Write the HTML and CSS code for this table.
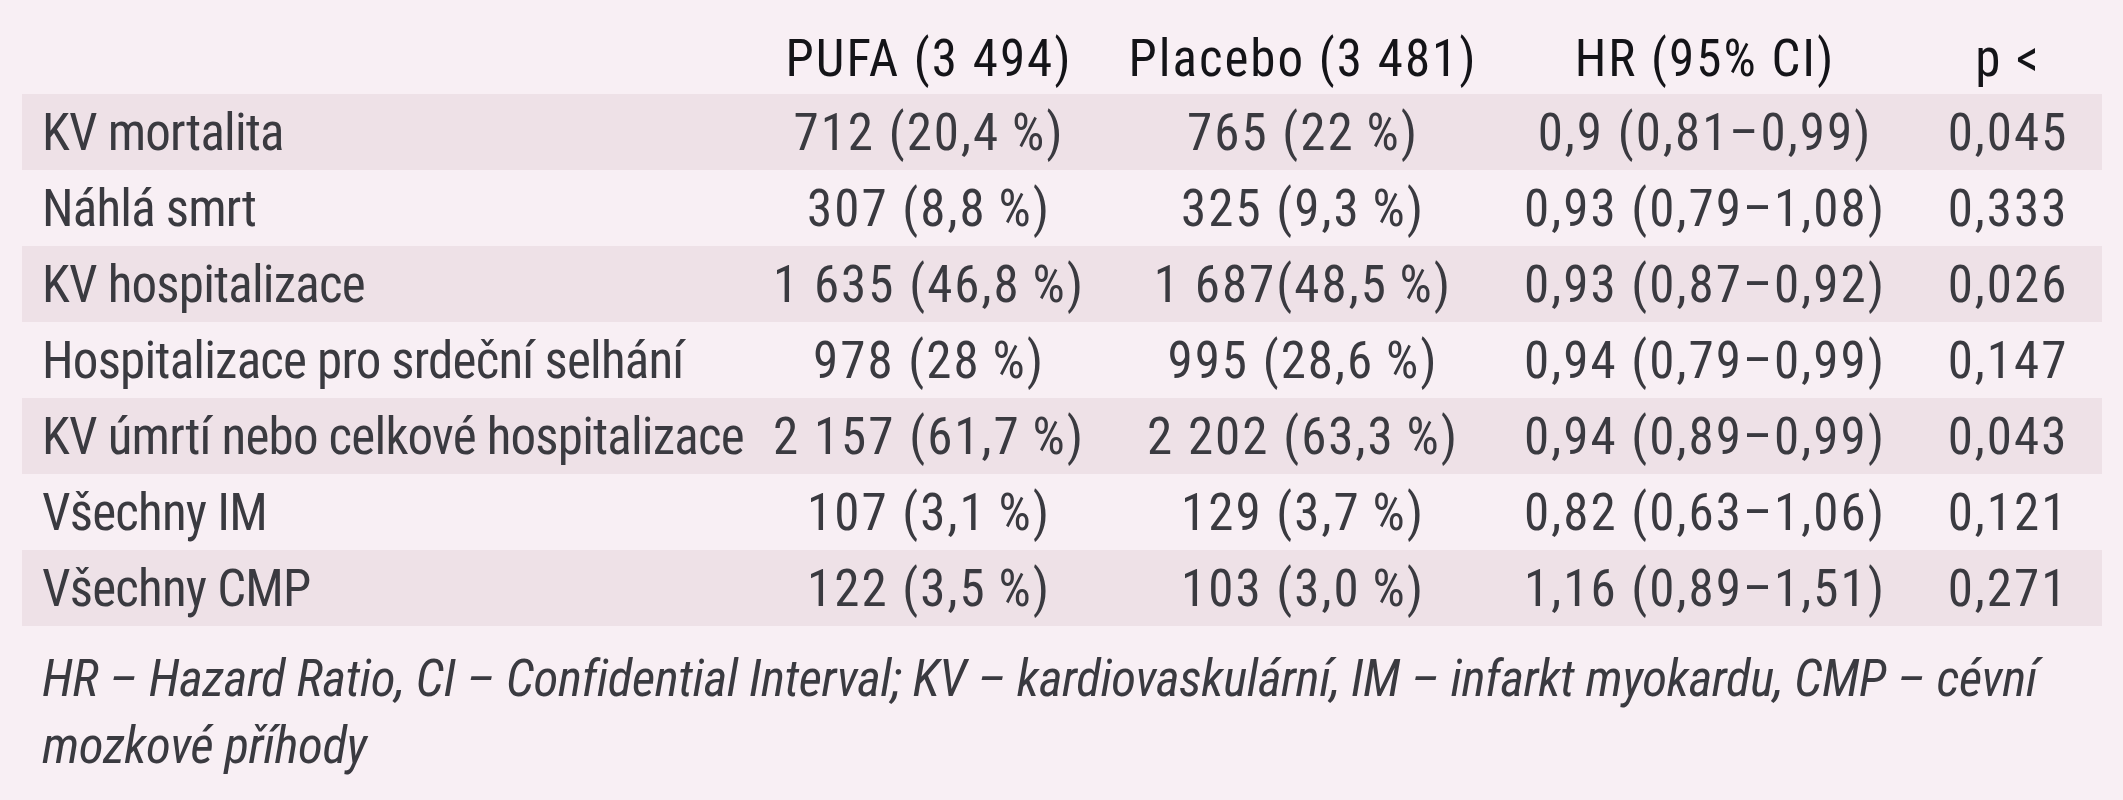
FILE: index.html
```html
<!DOCTYPE html>
<html lang="cs">
<head>
<meta charset="utf-8">
<title>PUFA vs Placebo</title>
<link rel="stylesheet" href="styles.css">
</head>
<body>
<div class="page">
  <table class="results">
    <colgroup>
      <col class="c-label">
      <col class="c-pufa">
      <col class="c-placebo">
      <col class="c-hr">
      <col class="c-p">
    </colgroup>
    <thead>
      <tr>
        <th class="label"></th>
        <th>PUFA (3 494)</th>
        <th>Placebo (3 481)</th>
        <th>HR (95% CI)</th>
        <th class="pval">p &lt;</th>
      </tr>
    </thead>
    <tbody>
      <tr class="alt"><td class="label">KV mortalita</td><td>712 (20,4&#8201;%)</td><td>765 (22&#8201;%)</td><td>0,9 (0,81–0,99)</td><td class="pval">0,045</td></tr>
      <tr><td class="label">Náhlá smrt</td><td>307 (8,8&#8201;%)</td><td>325 (9,3&#8201;%)</td><td>0,93 (0,79–1,08)</td><td class="pval">0,333</td></tr>
      <tr class="alt"><td class="label">KV hospitalizace</td><td>1 635 (46,8&#8201;%)</td><td>1 687(48,5&#8201;%)</td><td>0,93 (0,87–0,92)</td><td class="pval">0,026</td></tr>
      <tr><td class="label">Hospitalizace pro srdeční selhání</td><td>978 (28&#8201;%)</td><td>995 (28,6&#8201;%)</td><td>0,94 (0,79–0,99)</td><td class="pval">0,147</td></tr>
      <tr class="alt"><td class="label">KV úmrtí nebo celkové hospitalizace</td><td>2 157 (61,7&#8201;%)</td><td>2 202 (63,3&#8201;%)</td><td>0,94 (0,89–0,99)</td><td class="pval">0,043</td></tr>
      <tr><td class="label">Všechny IM</td><td>107 (3,1&#8201;%)</td><td>129 (3,7&#8201;%)</td><td>0,82 (0,63–1,06)</td><td class="pval">0,121</td></tr>
      <tr class="alt"><td class="label">Všechny CMP</td><td>122 (3,5&#8201;%)</td><td>103 (3,0&#8201;%)</td><td>1,16 (0,89–1,51)</td><td class="pval">0,271</td></tr>
    </tbody>
  </table>
  <p class="note">HR – Hazard Ratio, CI – Confidential Interval; KV – kardiovaskulární, IM – infarkt myokardu, CMP – cévní mozkové příhody</p>
</div>
</body>
</html>
```
FILE: styles.css
```css
html, body {
  margin: 0;
  padding: 0;
  background: #f8eff4;
}

.page {
  padding: 0 21px 0 22px;
  font-family: Roboto, "Liberation Sans", Arial, sans-serif;
  font-stretch: condensed;
  font-size: 51px;
  line-height: 61px;
  color: #3a3a40;
}

.results {
  width: 2080px;
  border-collapse: collapse;
  table-layout: fixed;
}

.c-label { width: 738px; }
.c-pufa { width: 338px; }
.c-placebo { width: 410px; }
.c-hr { width: 394px; }
.c-p { width: 200px; }

.results th {
  height: 89px;
  padding: 0 0 5px 0;
  vertical-align: bottom;
  text-align: center;
  font-weight: normal;
  color: #141418;
  letter-spacing: 2px;
  white-space: nowrap;
}

.results td {
  height: 76px;
  padding: 0;
  vertical-align: middle;
  text-align: center;
  letter-spacing: 2px;
  white-space: nowrap;
}

.results td.label {
  text-align: left;
  padding-left: 20px;
  letter-spacing: -0.8px;
}

.results .pval {
  padding-left: 12px;
}

.results tr.alt td {
  background: #eee1e7;
}

.note {
  margin: 19px 0 0 0;
  padding-left: 20px;
  padding-right: 16px;
  font-style: italic;
  letter-spacing: -0.4px;
  line-height: 67px;
  color: #3a3a40;
}
```
